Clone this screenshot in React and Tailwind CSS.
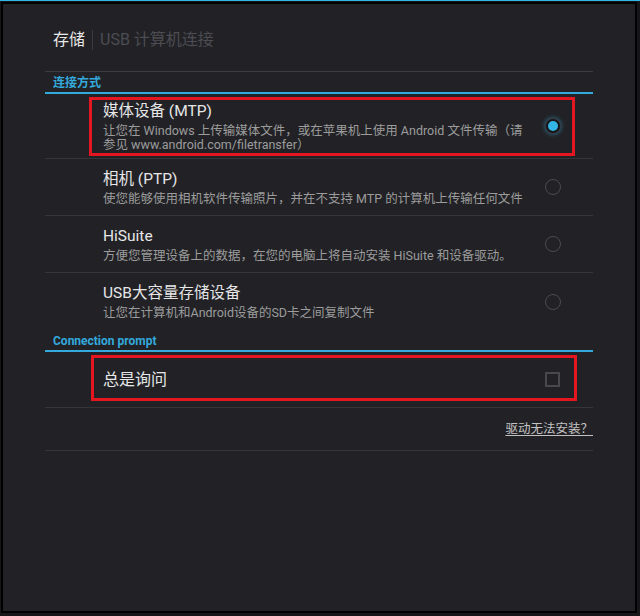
import React from 'react';

const font = { fontFamily: 'Roboto, "Noto Sans CJK SC", sans-serif' };

function Radio({ checked }) {
    if (checked) {
        return (
            <div className="w-4 h-4 rounded-full bg-[#15151a] border border-[#3a3a40] flex items-center justify-center shadow-[0_0_4px_rgba(51,181,229,0.6)]">
                <div className="w-[10px] h-[10px] rounded-full bg-[#33b5e5]"></div>
            </div>
        );
    }
    return <div className="w-4 h-4 rounded-full border-[1.5px] border-[#4a4a50]"></div>;
}

function Option({ title, lines, checked, boxed, divider = true, className }) {
    return (
        <div className={`relative flex items-center ${divider ? 'border-b border-[#35353a]' : ''} ${className}`}>
            <div className="flex-1 pl-[58px]">
                <div className="text-[15.5px] leading-[20px] text-[#e6e6e6]">{title}</div>
                <div className="mt-[3px]">
                    {lines.map((line, i) => (
                        <div key={i} className="text-[12.5px] leading-[14px] text-[#9c9c9c] whitespace-nowrap">{line}</div>
                    ))}
                </div>
            </div>
            <div className="w-[48px] flex justify-start shrink-0">
                <Radio checked={checked} />
            </div>
            {/* 标注框 */}
            {boxed && (
                <div className="absolute left-[44px] right-[18px] top-[3px] bottom-[2px] border-[3.5px] border-[#e4161f]"></div>
            )}
        </div>
    );
}

function SectionHeader({ children }) {
    return (
        <div>
            <div className="h-[20px] flex items-center pl-2 pt-[2px] text-[12px] font-bold text-[#33a9dc]">{children}</div>
            <div className="h-[2px] bg-[#33a9dc]"></div>
        </div>
    );
}

export default function App() {
    return (
        <div className="w-[640px] h-[616px] bg-[#161618] flex flex-col overflow-hidden" style={font}>
            <div className="h-px bg-[#33b5e5]"></div>
            <div className="ml-px mt-px mr-[3px] mb-[3px] flex-1 border-2 border-black bg-[#222226] px-[42px] pt-[12px]">
                {/* 标签栏 */}
                <div className="h-[48px] flex items-center pl-2">
                    <span className="text-[16px] text-[#e8e8e8]">存储</span>
                    <div className="w-px h-[20px] bg-[#3a3a3f] mx-[7px]"></div>
                    <span className="text-[16px] text-[#4c4c52]">USB 计算机连接</span>
                </div>
                <div className="mt-[7px] h-px bg-[#3c3c41]"></div>

                <SectionHeader>连接方式</SectionHeader>

                <Option
                    className="h-[65px]"
                    boxed
                    checked
                    title="媒体设备 (MTP)"
                    lines={['让您在 Windows 上传输媒体文件，或在苹果机上使用 Android 文件传输（请', '参见 www.android.com/filetransfer）']}
                />
                <Option className="h-[57px]" title="相机 (PTP)" lines={['使您能够使用相机软件传输照片，并在不支持 MTP 的计算机上传输任何文件']} />
                <Option className="h-[57px]" title="HiSuite" lines={['方便您管理设备上的数据，在您的电脑上将自动安装 HiSuite 和设备驱动。']} />
                <Option className="h-[57px]" divider={false} title="USB大容量存储设备" lines={['让您在计算机和Android设备的SD卡之间复制文件']} />

                <SectionHeader>Connection prompt</SectionHeader>

                <div className="relative h-[56px] flex items-center border-b border-[#35353a]">
                    <div className="flex-1 pl-[58px] text-[16px] text-[#e6e6e6]">总是询问</div>
                    <div className="w-[48px] flex justify-start shrink-0">
                        <div className="w-[15px] h-[15px] border-2 border-[#48484e]"></div>
                    </div>
                    <div className="absolute left-[46px] right-[16px] top-[3px] bottom-[6px] border-[3.5px] border-[#e4161f]"></div>
                </div>

                <div className="h-[43px] flex items-center justify-end border-b border-[#35353a]">
                    <a className="text-[12.5px] text-[#c2c2c2] underline underline-offset-2">驱动无法安装？</a>
                </div>
            </div>
        </div>
    );
}
